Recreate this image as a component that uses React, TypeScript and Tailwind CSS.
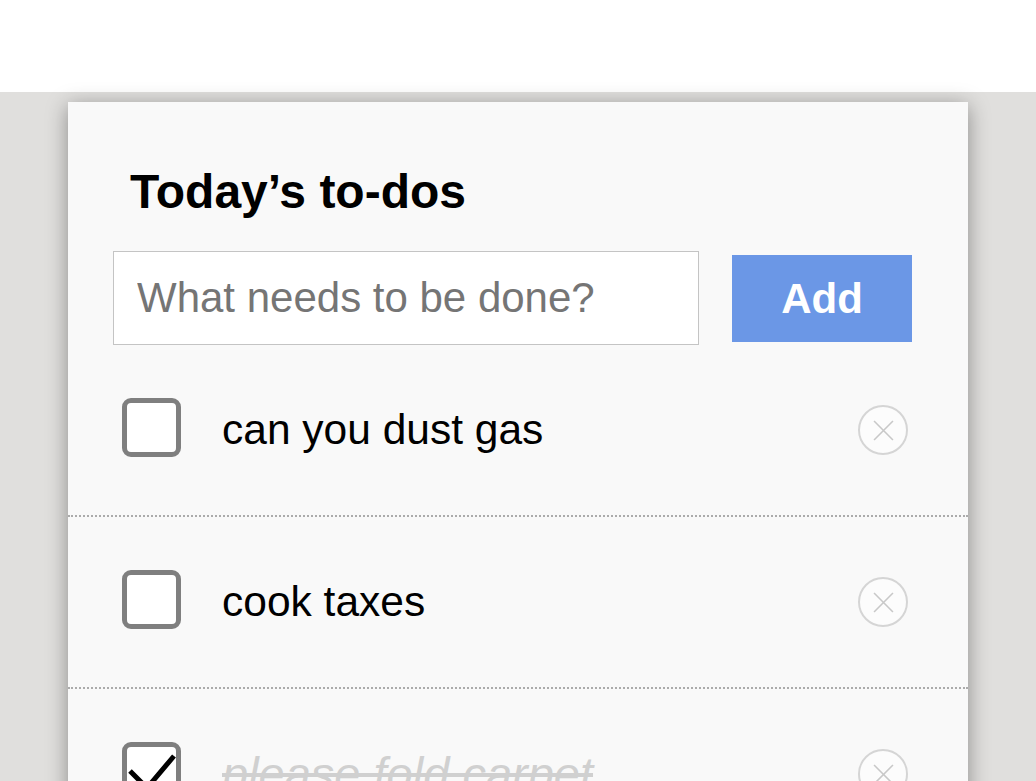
import { useState } from 'react'

type Todo = { id: number; text: string; done: boolean }

const initialTodos: Todo[] = [
  { id: 1, text: 'can you dust gas', done: false },
  { id: 2, text: 'cook taxes', done: false },
  { id: 3, text: 'please fold carpet', done: true },
]

function Checkbox({ checked, onToggle }: { checked: boolean; onToggle: () => void }) {
  return (
    <button
      onClick={onToggle}
      className="relative -mt-[6px] w-[59px] h-[59px] shrink-0 rounded-[9px] border-[5px] border-[#7f7f7f] bg-white"
    >
      {checked && (
        <svg viewBox="0 0 59 59" className="absolute left-[-5px] top-[-5px] w-[59px] h-[59px] overflow-visible">
          <path d="M8 29 L25 46 L52 14" fill="none" stroke="#000" strokeWidth="5" />
        </svg>
      )}
    </button>
  )
}

function RemoveButton({ onClick }: { onClick: () => void }) {
  return (
    <button
      onClick={onClick}
      className="w-[50px] h-[50px] shrink-0 rounded-full border-2 border-[#d5d5d5] bg-[#fcfcfc] flex items-center justify-center"
    >
      <svg viewBox="0 0 20 20" className="w-[21px] h-[21px]">
        <path d="M1 1 L19 19 M19 1 L1 19" stroke="#c8c8c8" strokeWidth="1.5" fill="none" />
      </svg>
    </button>
  )
}

export default function App() {
  const [todos, setTodos] = useState<Todo[]>(initialTodos)
  const [draft, setDraft] = useState('')

  function addTodo() {
    if (!draft.trim()) return
    setTodos(t => [...t, { id: Date.now(), text: draft.trim(), done: false }])
    setDraft('')
  }

  return (
    <div className="h-[781px] overflow-hidden bg-white font-['Liberation_Sans',Arial,sans-serif] text-black">
      <div className="h-[92px] bg-white" />
      <div className="h-full bg-[#e0dfdd] pt-[10px]">
        <div className="mx-auto w-[900px] bg-[#f9f9f9] shadow-[0_4px_20px_rgba(0,0,0,0.38)] pt-[62px]">
          <h1 className="pl-[62px] h-[56px] leading-[56px] text-[48px] font-bold">
            Today’s to-dos
          </h1>

          <div className="flex items-center pl-[45px] pr-[56px] mt-[31px]">
            <input
              value={draft}
              onChange={e => setDraft(e.target.value)}
              placeholder="What needs to be done?"
              className="w-[586px] h-[94px] border border-[#c4c4c4] bg-white pl-[23px] text-[42px] outline-none placeholder:text-[#757575]"
            />
            <button
              onClick={addTodo}
              className="ml-[33px] w-[180px] h-[87px] bg-[#6b97e6] text-white text-[42px] font-bold"
            >
              Add
            </button>
          </div>

          <ul>
            {todos.map(todo => (
              <li
                key={todo.id}
                className="flex items-center h-[172px] pl-[54px] pr-[60px] border-b-2 border-dotted border-[#ababab]"
              >
                <Checkbox
                  checked={todo.done}
                  onToggle={() =>
                    setTodos(t => t.map(x => (x.id === todo.id ? { ...x, done: !x.done } : x)))
                  }
                />
                <span
                  className={
                    todo.done
                      ? 'ml-[41px] flex-1 text-[47px] italic text-[#d0d0d0] line-through'
                      : 'ml-[41px] flex-1 text-[42.5px]'
                  }
                >
                  {todo.text}
                </span>
                <RemoveButton onClick={() => setTodos(t => t.filter(x => x.id !== todo.id))} />
              </li>
            ))}
          </ul>
        </div>
      </div>
    </div>
  )
}
